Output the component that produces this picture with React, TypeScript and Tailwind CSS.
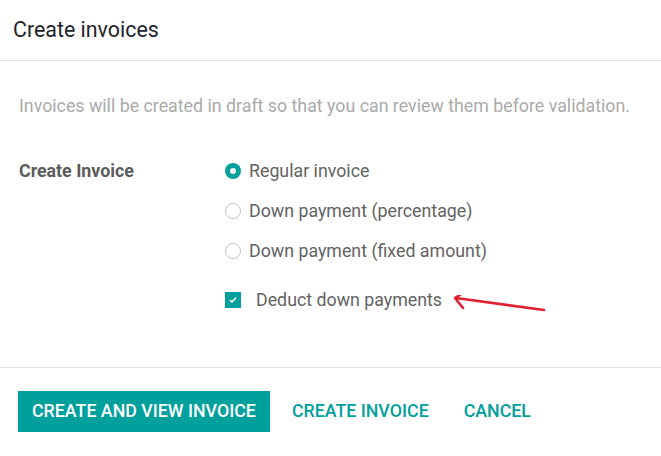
import React from "react";

const options = [
    { label: "Regular invoice", checked: true },
    { label: "Down payment (percentage)", checked: false },
    { label: "Down payment (fixed amount)", checked: false },
];

function Radio({ checked }: { checked: boolean }) {
    if (checked) {
        return (
            <span className="flex h-4 w-4 items-center justify-center rounded-full bg-[#00a09d]">
                <span className="h-[6px] w-[6px] rounded-full bg-[#f4f4f8]" />
            </span>
        );
    }
    return <span className="h-4 w-4 rounded-full border border-[#c4c4c4] bg-white" />;
}

export default function App() {
    return (
        <div className="flex h-[456px] w-[661px] flex-col bg-white font-['Roboto',sans-serif] text-[#636363]">
            <div className="flex h-[61px] items-center border-b border-[#e2e2e2] px-[13px]">
                <h1 className="text-[21.4px] text-[#212529]">Create invoices</h1>
            </div>

            <div className="flex flex-1 flex-col px-[19px] pt-[33px]">
                <p className="text-[17.8px] leading-6 text-[#aaaaaa]">
                    Invoices will be created in draft so that you can review them before validation.
                </p>

                <div className="mt-[41px] flex">
                    <div className="w-[206px] text-[17.8px] font-bold leading-6 text-[#5c5c5c]">Create Invoice</div>
                    <div className="flex flex-col">
                        {options.map((o) => (
                            <div key={o.label} className="flex h-10 items-start">
                                <div className="flex h-6 items-center gap-2">
                                    <Radio checked={o.checked} />
                                    <span className="text-[17.8px] leading-6">{o.label}</span>
                                </div>
                            </div>
                        ))}
                        <div className="flex items-center">
                            <span className="flex h-4 w-4 items-center justify-center bg-[#00a09d]">
                                <svg width="8" height="8" viewBox="0 0 8 8" fill="none">
                                    <path d="M1 4.2 L3 6 L7 1.8" stroke="white" strokeWidth="1.6" />
                                </svg>
                            </span>
                            <span className="ml-[15px] text-[17.8px] leading-6">Deduct down payments</span>
                            <svg width="100" height="26" viewBox="0 0 100 26" className="ml-[10px] mt-[16px]" fill="none">
                                <path
                                    d="M92 15 L4 3 M14 -4 L3 3 L11 13"
                                    stroke="#e3202f"
                                    strokeWidth="2.6"
                                    strokeLinecap="round"
                                    strokeLinejoin="round"
                                />
                            </svg>
                        </div>
                    </div>
                </div>
            </div>

            <div className="flex h-[89px] items-start gap-[22px] border-t border-[#e2e2e2] px-[18px] pt-[23px]">
                <button className="h-[41px] bg-[#00a09d] px-[14px] text-[17.8px] font-medium text-white">
                    CREATE AND VIEW INVOICE
                </button>
                <button className="h-[41px] text-[17.8px] font-medium text-[#00a09d]">CREATE INVOICE</button>
                <button className="ml-[13px] h-[41px] text-[17.8px] font-medium text-[#00a09d]">CANCEL</button>
            </div>
        </div>
    );
}
